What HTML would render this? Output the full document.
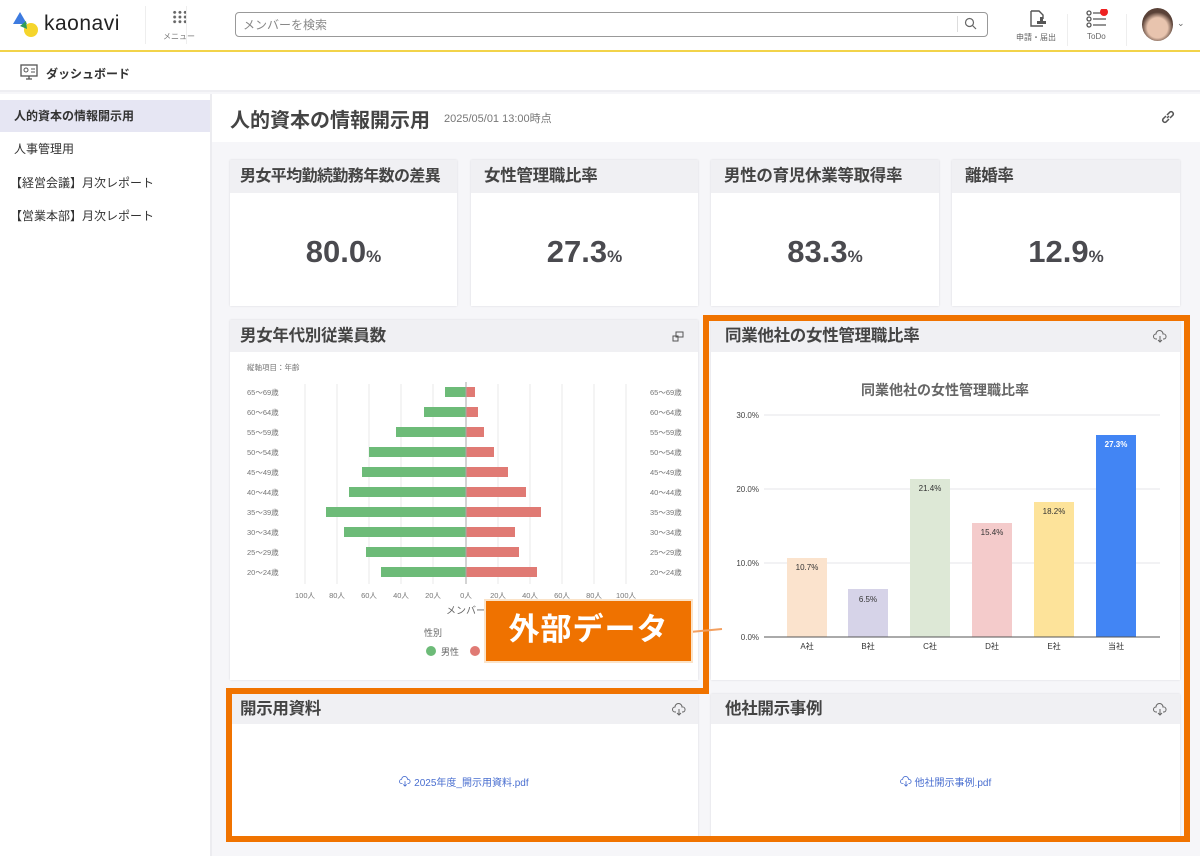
<!DOCTYPE html>
<html><head><meta charset="utf-8"><style>
*{box-sizing:border-box;margin:0;padding:0}
body{width:1200px;height:856px;overflow:hidden;background:#f6f6f9;font-family:"Liberation Sans","Noto Sans CJK JP",sans-serif;color:#333;position:relative}
.abs{position:absolute}
.card{position:absolute;background:#fff;box-shadow:0 0 2px rgba(0,0,0,.12)}
.ch{height:33px;background:#f0f0f3;padding:0 10px;font-size:16.5px;font-weight:bold;color:#444;line-height:33px;white-space:nowrap;overflow:hidden;letter-spacing:-.3px}
.val{position:absolute;left:0;right:0;top:74px;text-align:center;font-size:31px;font-weight:bold;color:#4a4a4f}
.val small{font-size:17px;font-weight:bold}
.sb div{position:absolute;left:0;width:210px;height:32px;line-height:32px;padding-left:14px;font-size:12px;color:#333}
</style></head><body>
<!-- header -->
<div class="abs" style="left:0;top:0;width:1200px;height:50px;background:#fff"></div>
<div class="abs" style="left:0;top:50px;width:1200px;height:2px;background:#f2d34a"></div>
<svg class="abs" style="left:11px;top:10px" width="30" height="30" viewBox="0 0 30 30"><path d="M2 14 L9 2 L16 14 Z" fill="#3d7be0"/><circle cx="20" cy="20" r="7" fill="#f5d52c"/><path d="M9 16 L15 11 L16 19 Z" fill="#2f9b5a"/></svg>
<div class="abs" style="left:44px;top:12px;font-size:21px;color:#222;letter-spacing:.5px">kaonavi</div>
<div class="abs" style="left:145px;top:6px;width:1px;height:38px;background:#eee"></div>
<div class="abs" style="left:172px;top:10px;width:16px;height:14px;background:radial-gradient(circle,#666 1.4px,transparent 1.6px) 0 0/5.3px 4.7px"></div>
<div class="abs" style="left:163px;top:31px;font-size:8px;color:#777">メニュー</div>
<div class="abs" style="left:186px;top:6px;width:1px;height:38px;background:#eee"></div>
<div class="abs" style="left:235px;top:12px;width:753px;height:25px;border:1px solid #999;border-radius:4px;font-size:12px;color:#888;padding:5px 7px;line-height:14px">メンバーを検索</div>
<div class="abs" style="left:957px;top:16px;width:1px;height:16px;background:#ddd"></div>
<svg class="abs" style="left:964px;top:17px" width="13" height="13" viewBox="0 0 13 13"><circle cx="5.5" cy="5.5" r="4" fill="none" stroke="#666" stroke-width="1.2"/><path d="M8.5 8.5 L12 12" stroke="#666" stroke-width="1.2"/></svg>
<svg class="abs" style="left:1028px;top:9px" width="20" height="20" viewBox="0 0 20 20"><path d="M3 2 H11 L15 6 V10 M15 17 H3 V2" fill="none" stroke="#555" stroke-width="1.4"/><path d="M9 12 h9 v3 h-9z M12 8 h3 v4 h-3z" fill="#555"/></svg>
<div class="abs" style="left:1016px;top:32px;font-size:8px;color:#666">申請・届出</div>
<div class="abs" style="left:1067px;top:14px;width:1px;height:32px;background:#eee"></div>
<svg class="abs" style="left:1086px;top:9px" width="22" height="20" viewBox="0 0 22 20"><g fill="none" stroke="#555" stroke-width="1.3"><circle cx="3" cy="4" r="2"/><circle cx="3" cy="10" r="2"/><circle cx="3" cy="16" r="2"/><path d="M7 4h9M7 10h13M7 16h13"/></g><circle cx="18" cy="3" r="4" fill="#e22"/></svg>
<div class="abs" style="left:1087px;top:32px;font-size:8px;color:#666">ToDo</div>
<div class="abs" style="left:1126px;top:14px;width:1px;height:32px;background:#eee"></div>
<div class="abs" style="left:1142px;top:8px;width:31px;height:33px;border-radius:50%;background:radial-gradient(circle at 50% 60%,#e8c4ae 40%,#5a4238 62%)"></div>
<div class="abs" style="left:1177px;top:18px;font-size:9px;color:#666">⌄</div>
<!-- subheader -->
<div class="abs" style="left:0;top:52px;width:1200px;height:40px;background:#fff;border-bottom:2px solid #eeeef2"></div>
<svg class="abs" style="left:20px;top:64px" width="18" height="16" viewBox="0 0 18 16"><rect x="1" y="1" width="16" height="11" fill="none" stroke="#555" stroke-width="1.3"/><path d="M6 15h6M9 12v3" stroke="#555" stroke-width="1.3"/><circle cx="6" cy="6" r="2" fill="none" stroke="#555"/><path d="M11 5h4M11 8h4" stroke="#555"/></svg>
<div class="abs" style="left:46px;top:65px;font-size:12px;font-weight:bold;color:#333">ダッシュボード</div>
<!-- sidebar -->
<div class="abs sb" style="left:0;top:94px;width:210px;height:762px;background:#fff">
<div style="top:6px;background:#e6e6f3;font-weight:bold">人的資本の情報開示用</div>
<div style="top:39px">人事管理用</div>
<div style="top:73px;padding-left:10px">【経営会議】月次レポート</div>
<div style="top:106px;padding-left:10px">【営業本部】月次レポート</div>
</div>
<div class="abs" style="left:210px;top:94px;width:2px;height:762px;background:#ececf0"></div>
<!-- title -->
<div class="abs" style="left:212px;top:94px;width:988px;height:48px;background:#fff"></div>
<div class="abs" style="left:230px;top:104px;font-size:20px;font-weight:bold;color:#444">人的資本の情報開示用</div>
<div class="abs" style="left:444px;top:110px;font-size:11px;color:#777">2025/05/01 13:00時点</div>
<svg class="abs" style="left:1160px;top:109px" width="16" height="16" viewBox="0 0 16 16"><g fill="none" stroke="#555" stroke-width="1.5"><path d="M7 9 L9 7"/><path d="M6 7 L3 10 a2.2 2.2 0 0 0 3 3 L9 10"/><path d="M10 9 L13 6 a2.2 2.2 0 0 0 -3 -3 L7 6"/></g></svg>
<!-- KPI -->
<div class="card" style="left:230px;top:160px;width:227px;height:146px"><div class="ch" style="font-size:16px;letter-spacing:-.6px">男女平均勤続勤務年数の差異</div><div class="val">80.0<small>%</small></div></div>
<div class="card" style="left:471px;top:160px;width:227px;height:146px"><div class="ch" style="padding-left:13px">女性管理職比率</div><div class="val">27.3<small>%</small></div></div>
<div class="card" style="left:711px;top:160px;width:228px;height:146px"><div class="ch" style="padding-left:13px">男性の育児休業等取得率</div><div class="val">83.3<small>%</small></div></div>
<div class="card" style="left:952px;top:160px;width:228px;height:146px"><div class="ch" style="padding-left:13px">離婚率</div><div class="val">12.9<small>%</small></div></div>
<!-- middle cards -->
<div class="card" style="left:230px;top:320px;width:468px;height:360px"><div class="ch" style="height:32px;line-height:32px">男女年代別従業員数</div>
<svg class="abs" style="left:442px;top:11px" width="12" height="11" viewBox="0 0 12 11"><rect x="4" y="1" width="7" height="5" fill="none" stroke="#555"/><rect x="1" y="5" width="5" height="5" fill="none" stroke="#555"/></svg></div>
<div class="card" style="left:711px;top:320px;width:469px;height:360px"><div class="ch" style="height:32px;line-height:32px;padding-left:14px">同業他社の女性管理職比率</div>
<svg class="abs" style="left:442px;top:10px" width="14" height="13" viewBox="0 0 14 13"><path d="M4 9 H3 a2.5 2.5 0 0 1 0-5 a3.5 3.5 0 0 1 7 0 a2.5 2.5 0 0 1 1 5 H10 M7 6 v6 M5 10 l2 2 2-2" fill="none" stroke="#666"/></svg></div>
<!-- pyramid -->
<svg class="abs" style="left:230px;top:352px" width="468" height="328" viewBox="230 352 468 328" font-family="Liberation Sans,Noto Sans CJK JP,sans-serif">
<text x="247" y="370" font-size="7.5" fill="#777">縦軸項目：年齢</text>
<g stroke="#e8e8ea" stroke-width="1">
<line x1="305" y1="384" x2="305" y2="584"/><line x1="337" y1="384" x2="337" y2="584"/><line x1="369" y1="384" x2="369" y2="584"/><line x1="401" y1="384" x2="401" y2="584"/><line x1="433" y1="384" x2="433" y2="584"/><line x1="498" y1="384" x2="498" y2="584"/><line x1="530" y1="384" x2="530" y2="584"/><line x1="562" y1="384" x2="562" y2="584"/><line x1="594" y1="384" x2="594" y2="584"/><line x1="626" y1="384" x2="626" y2="584"/></g>
<g fill="#6dbb78">
<rect x="445" y="387" width="21" height="10"/><rect x="424" y="407" width="42" height="10"/><rect x="396" y="427" width="70" height="10"/><rect x="369" y="447" width="97" height="10"/><rect x="362" y="467" width="104" height="10"/><rect x="349" y="487" width="117" height="10"/><rect x="326" y="507" width="140" height="10"/><rect x="344" y="527" width="122" height="10"/><rect x="366" y="547" width="100" height="10"/><rect x="381" y="567" width="85" height="10"/></g>
<g fill="#e07a74">
<rect x="466" y="387" width="9" height="10"/><rect x="466" y="407" width="12" height="10"/><rect x="466" y="427" width="18" height="10"/><rect x="466" y="447" width="28" height="10"/><rect x="466" y="467" width="42" height="10"/><rect x="466" y="487" width="60" height="10"/><rect x="466" y="507" width="75" height="10"/><rect x="466" y="527" width="49" height="10"/><rect x="466" y="547" width="53" height="10"/><rect x="466" y="567" width="71" height="10"/></g>
<line x1="466" y1="382" x2="466" y2="584" stroke="#aaa"/>
<g font-size="7.5" fill="#777">
<text x="247" y="395">65〜69歳</text><text x="247" y="415">60〜64歳</text><text x="247" y="435">55〜59歳</text><text x="247" y="455">50〜54歳</text><text x="247" y="475">45〜49歳</text><text x="247" y="495">40〜44歳</text><text x="247" y="515">35〜39歳</text><text x="247" y="535">30〜34歳</text><text x="247" y="555">25〜29歳</text><text x="247" y="575">20〜24歳</text>
<text x="650" y="395">65〜69歳</text><text x="650" y="415">60〜64歳</text><text x="650" y="435">55〜59歳</text><text x="650" y="455">50〜54歳</text><text x="650" y="475">45〜49歳</text><text x="650" y="495">40〜44歳</text><text x="650" y="515">35〜39歳</text><text x="650" y="535">30〜34歳</text><text x="650" y="555">25〜29歳</text><text x="650" y="575">20〜24歳</text>
<g text-anchor="middle"><text x="305" y="598">100人</text><text x="337" y="598">80人</text><text x="369" y="598">60人</text><text x="401" y="598">40人</text><text x="433" y="598">20人</text><text x="466" y="598">0人</text><text x="498" y="598">20人</text><text x="530" y="598">40人</text><text x="562" y="598">60人</text><text x="594" y="598">80人</text><text x="626" y="598">100人</text></g></g>
<text x="446" y="614" font-size="10" fill="#666">メンバー</text>
<text x="424" y="636" font-size="9" fill="#666">性別</text>
<circle cx="431" cy="651" r="5" fill="#6dbb78"/><text x="441" y="655" font-size="9" fill="#666">男性</text>
<circle cx="475" cy="651" r="5" fill="#e07a74"/>
</svg>
<!-- bar chart -->
<svg class="abs" style="left:711px;top:352px" width="469" height="328" viewBox="711 352 469 328" font-family="Liberation Sans,Noto Sans CJK JP,sans-serif">
<text x="945" y="395" font-size="14" font-weight="bold" fill="#666" text-anchor="middle">同業他社の女性管理職比率</text>
<g stroke="#e4e4ea"><line x1="764" y1="415" x2="1160" y2="415"/><line x1="764" y1="489" x2="1160" y2="489"/><line x1="764" y1="563" x2="1160" y2="563"/></g>
<g font-size="8" fill="#444" text-anchor="end"><text x="759" y="418">30.0%</text><text x="759" y="492">20.0%</text><text x="759" y="566">10.0%</text><text x="759" y="640">0.0%</text></g>
<rect x="787" y="558" width="40" height="79" fill="#fbe3cd"/>
<rect x="848" y="589" width="40" height="48" fill="#d6d3e8"/>
<rect x="910" y="479" width="40" height="158" fill="#dde8d6"/>
<rect x="972" y="523" width="40" height="114" fill="#f4cbcb"/>
<rect x="1034" y="502" width="40" height="135" fill="#fde39a"/>
<rect x="1096" y="435" width="40" height="202" fill="#4285f4"/>
<line x1="764" y1="637" x2="1160" y2="637" stroke="#555"/>
<g font-size="8" fill="#333" text-anchor="middle">
<text x="807" y="570">10.7%</text><text x="868" y="602">6.5%</text><text x="930" y="491">21.4%</text><text x="992" y="535">15.4%</text><text x="1054" y="514">18.2%</text><text x="1116" y="447" fill="#fff" font-weight="bold">27.3%</text>
<text x="807" y="649">A社</text><text x="868" y="649">B社</text><text x="930" y="649">C社</text><text x="992" y="649">D社</text><text x="1054" y="649">E社</text><text x="1116" y="649">当社</text></g>
</svg>
<!-- bottom cards -->
<div class="card" style="left:230px;top:694px;width:468px;height:145px"><div class="ch" style="height:30px;line-height:30px">開示用資料</div>
<svg class="abs" style="left:442px;top:9px" width="14" height="13" viewBox="0 0 14 13"><path d="M4 9 H3 a2.5 2.5 0 0 1 0-5 a3.5 3.5 0 0 1 7 0 a2.5 2.5 0 0 1 1 5 H10 M7 6 v6 M5 10 l2 2 2-2" fill="none" stroke="#666"/></svg>
<div class="abs" style="left:0;right:0;top:80px;text-align:center;font-size:10px;color:#4a6fd0"><svg width="12" height="11" viewBox="0 0 14 13" style="vertical-align:-1px"><path d="M4 9 H3 a2.5 2.5 0 0 1 0-5 a3.5 3.5 0 0 1 7 0 a2.5 2.5 0 0 1 1 5 H10 M7 6 v6 M5 10 l2 2 2-2" fill="none" stroke="#4a6fd0"/></svg> 2025年度_開示用資料.pdf</div></div>
<div class="card" style="left:711px;top:694px;width:469px;height:145px"><div class="ch" style="height:30px;line-height:30px;padding-left:14px">他社開示事例</div>
<svg class="abs" style="left:442px;top:9px" width="14" height="13" viewBox="0 0 14 13"><path d="M4 9 H3 a2.5 2.5 0 0 1 0-5 a3.5 3.5 0 0 1 7 0 a2.5 2.5 0 0 1 1 5 H10 M7 6 v6 M5 10 l2 2 2-2" fill="none" stroke="#666"/></svg>
<div class="abs" style="left:0;right:0;top:80px;text-align:center;font-size:10px;color:#4a6fd0"><svg width="12" height="11" viewBox="0 0 14 13" style="vertical-align:-1px"><path d="M4 9 H3 a2.5 2.5 0 0 1 0-5 a3.5 3.5 0 0 1 7 0 a2.5 2.5 0 0 1 1 5 H10 M7 6 v6 M5 10 l2 2 2-2" fill="none" stroke="#4a6fd0"/></svg> 他社開示事例.pdf</div></div>
<!-- orange outline -->
<svg class="abs" style="left:0;top:0" width="1200" height="856"><polygon points="706,318 1187,318 1187,839 229,839 229,691 706,691" fill="none" stroke="#f07300" stroke-width="6"/>
<line x1="690" y1="632" x2="722" y2="629" stroke="#f3a060" stroke-width="2"/></svg>
<div class="abs" style="left:484px;top:599px;width:209px;height:64px;background:#ef7200;border:2px solid #fbe3c8;color:#fff;font-size:31px;font-weight:bold;text-align:center;line-height:58px;letter-spacing:1px">外部データ</div>
</body></html>
